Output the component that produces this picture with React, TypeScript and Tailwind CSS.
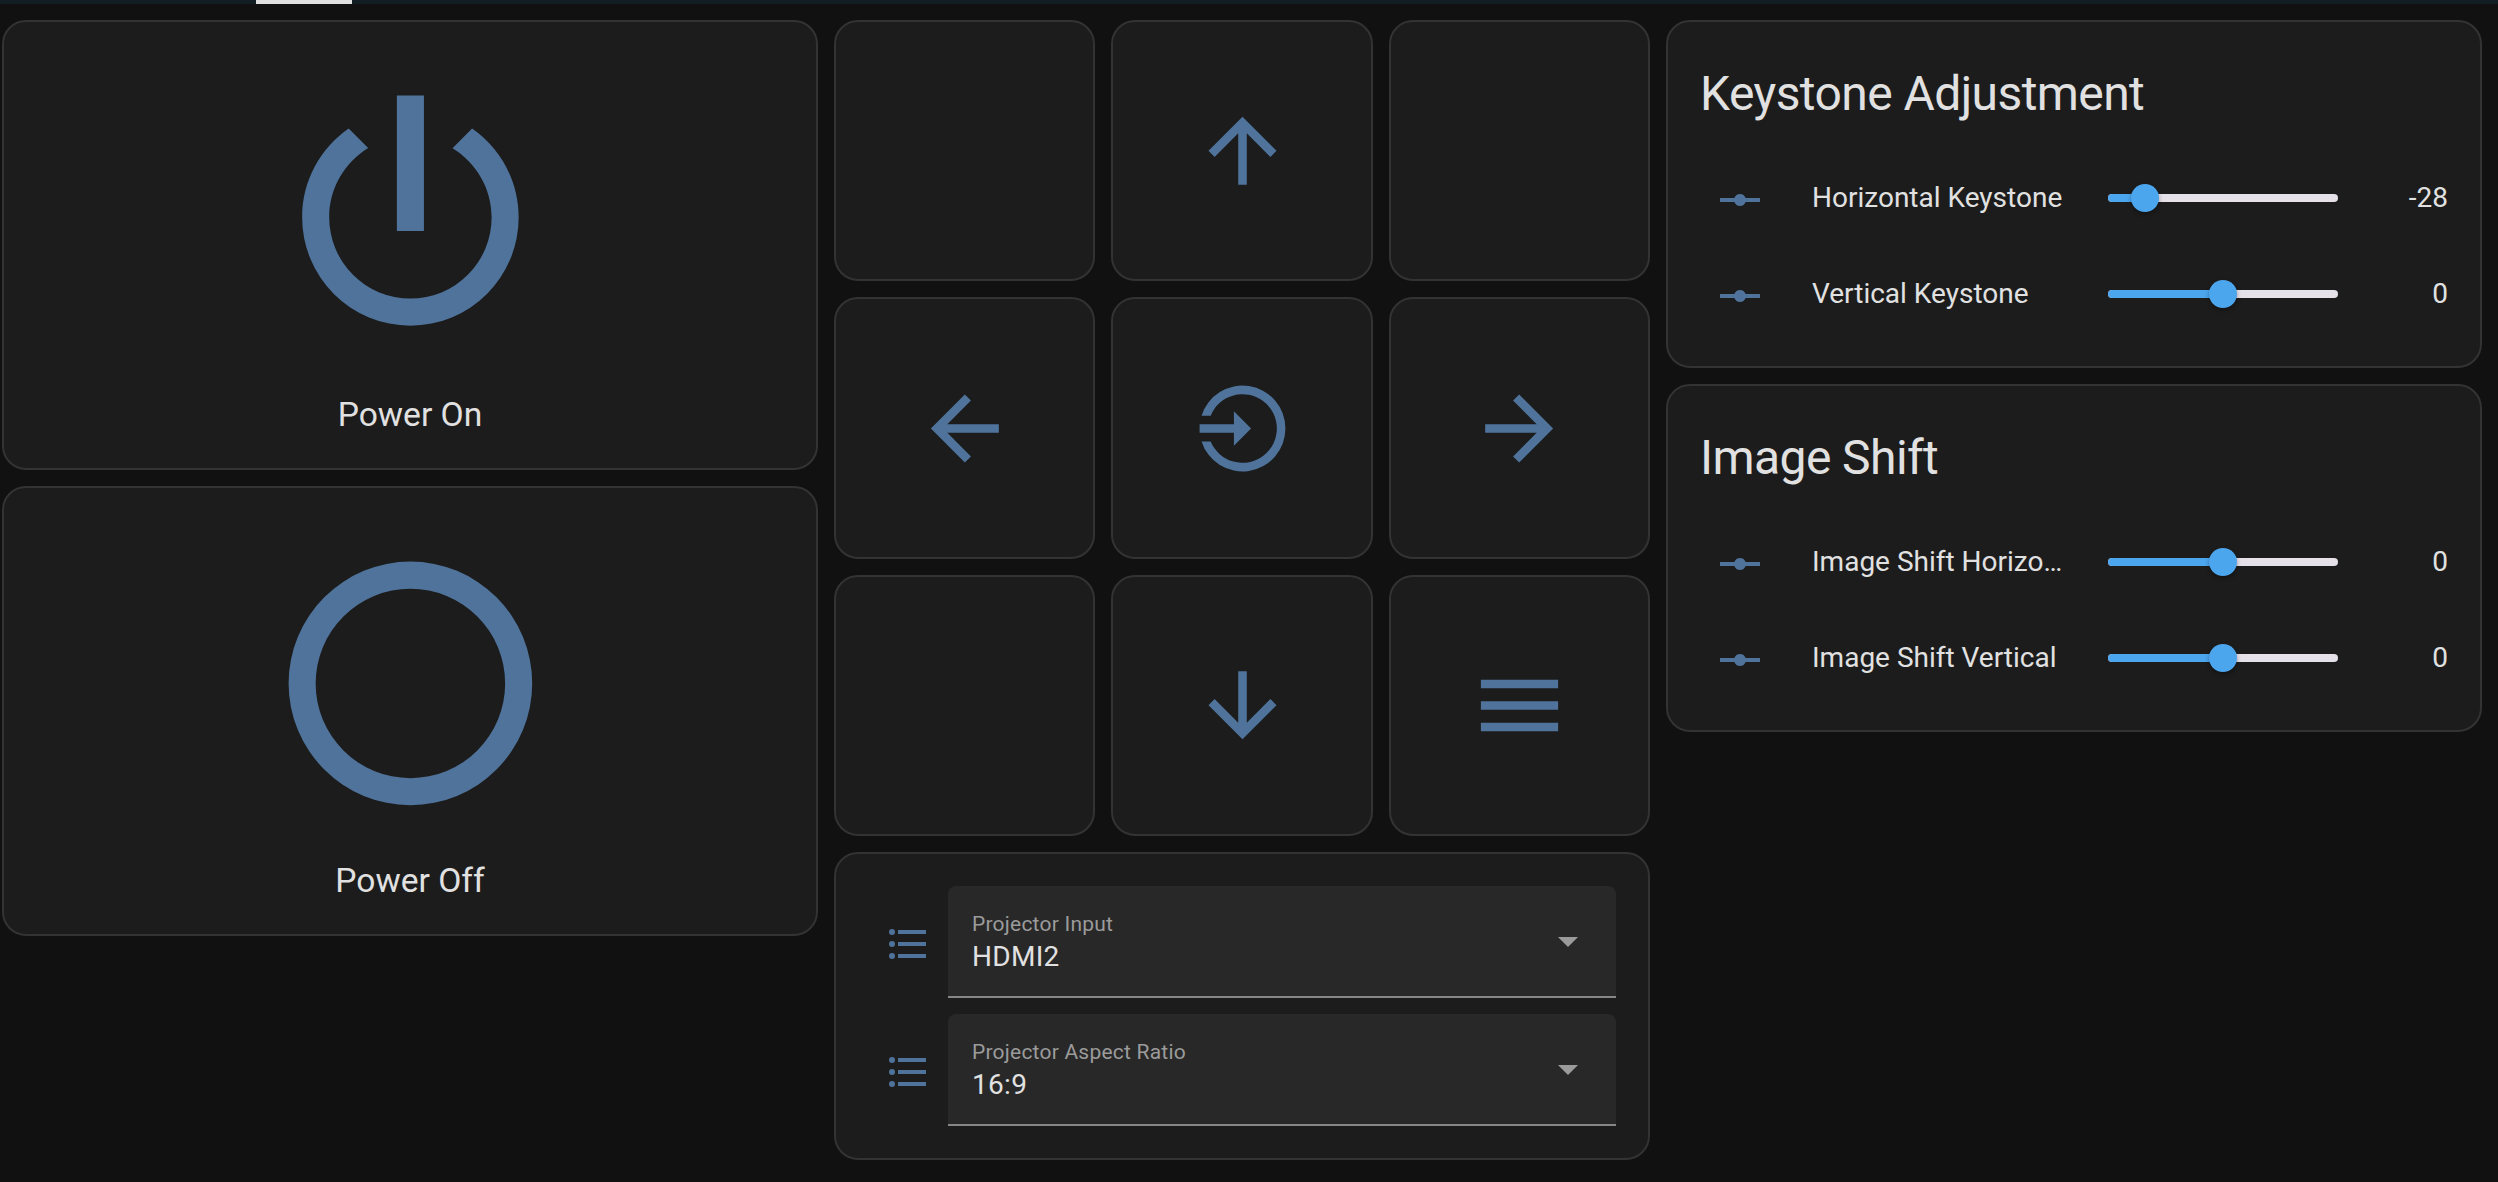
import type { ReactNode } from "react";

const ICONS = {
  power:
    "M16.56,5.44L15.11,6.89C16.84,7.94 18,9.83 18,12A6,6 0 0,1 12,18A6,6 0 0,1 6,12C6,9.83 7.16,7.94 8.88,6.88L7.44,5.44C5.36,6.88 4,9.28 4,12A8,8 0 0,0 12,20A8,8 0 0,0 20,12C20,9.28 18.64,6.88 16.56,5.44M13,3H11V13H13",
  powerOff:
    "M12,3A9,9 0 0,0 3,12A9,9 0 0,0 12,21A9,9 0 0,0 21,12A9,9 0 0,0 12,3M12,19A7,7 0 0,1 5,12A7,7 0 0,1 12,5A7,7 0 0,1 19,12A7,7 0 0,1 12,19Z",
  up: "M13,20H11V8L5.5,13.5L4.08,12.08L12,4.16L19.92,12.08L18.5,13.5L13,8V20Z",
  down: "M11,4H13V16L18.5,10.5L19.92,11.92L12,19.84L4.08,11.92L5.5,10.5L11,16V4Z",
  left: "M20,11V13H8L13.5,18.5L12.08,19.92L4.16,12L12.08,4.08L13.5,5.5L8,11H20Z",
  right: "M4,11V13H16L10.5,18.5L11.92,19.92L19.84,12L11.92,4.08L10.5,5.5L16,11H4Z",
  enter:
    "M14,12L10,8V11H2V13H10V16M22,12A10,10 0 0,1 2.46,15H4.59A8,8 0 1,0 4.59,9H2.46A10,10 0 0,1 22,12Z",
  menu: "M3,6H21V8H3V6M3,11H21V13H3V11M3,16H21V18H3V16Z",
  list: "M7,5H21V7H7V5M7,13V11H21V13H7M4,4.5A1.5,1.5 0 0,1 5.5,6A1.5,1.5 0 0,1 4,7.5A1.5,1.5 0 0,1 2.5,6A1.5,1.5 0 0,1 4,4.5M4,10.5A1.5,1.5 0 0,1 5.5,12A1.5,1.5 0 0,1 4,13.5A1.5,1.5 0 0,1 2.5,12A1.5,1.5 0 0,1 4,10.5M7,19V17H21V19H7M4,16.5A1.5,1.5 0 0,1 5.5,18A1.5,1.5 0 0,1 4,19.5A1.5,1.5 0 0,1 2.5,18A1.5,1.5 0 0,1 4,16.5Z",
  vertex:
    "M2,11H9.17C9.58,9.83 10.69,9 12,9C13.31,9 14.42,9.83 14.83,11H22V13H14.83C14.42,14.17 13.31,15 12,15C10.69,15 9.58,14.17 9.17,13H2V11Z",
  caret: "M7,10L12,15L17,10Z",
};

type IconName = keyof typeof ICONS;

function Icon({ name, className }: { name: IconName; className: string }) {
  return (
    <svg viewBox="0 0 24 24" fill="currentColor" className={`shrink-0 ${className}`}>
      <path d={ICONS[name]} />
    </svg>
  );
}

function Card({ className = "", children }: { className?: string; children?: ReactNode }) {
  return (
    <div className={`rounded-3xl border-2 border-[#333333] bg-[#1c1c1c] ${className}`}>{children}</div>
  );
}

function PowerButton({ icon, label }: { icon: IconName; label: string }) {
  return (
    <Card className="flex h-[450px] flex-col items-center pt-[32.8px]">
      <Icon name={icon} className="size-[324.8px] text-[#4f739b]" />
      <span className="mt-[14.4px] text-[33.6px] leading-[41px]">{label}</span>
    </Card>
  );
}

const PAD: (IconName | null)[] = [null, "up", null, "left", "enter", "right", null, "down", "menu"];

function RemotePad() {
  return (
    <div className="grid grid-cols-3 gap-4">
      {PAD.map((name, i) => (
        <Card
          key={i}
          className={`flex aspect-square items-center justify-center ${i % 3 === 1 ? "pl-px" : ""}`}
        >
          {name && <Icon name={name} className="size-[103px] text-[#4f739b]" />}
        </Card>
      ))}
    </div>
  );
}

function SelectRow({ label, value }: { label: string; value: string }) {
  return (
    <div className="flex items-center gap-4">
      <Icon name="list" className="mt-1 size-12 text-[#4f739b]" />
      <div className="flex h-28 grow items-center justify-between rounded-t-lg border-b-2 border-[#868686] bg-[#282828] px-6">
        <div className="flex flex-col pt-0.5">
          <span className="text-[21px] leading-7 tracking-[0.22px] text-[#9b9b9b]">{label}</span>
          <span className="mt-px text-[28px] leading-9 tracking-[0.3px]">{value}</span>
        </div>
        <Icon name="caret" className="size-12 text-[#9b9b9b]" />
      </div>
    </div>
  );
}

function SliderRow({ label, value, offset }: { label: string; value: number; offset: number }) {
  return (
    <div className="flex h-20 items-center">
      <Icon name="vertex" className="mt-1 ml-4 size-12 text-[#4f739b]" />
      <span className="ml-12 w-[252px] truncate text-[28px] leading-10">{label}</span>
      <div className="relative ml-11 h-2 w-[230px] rounded bg-[#e6e0e9]">
        <div className="h-2 rounded-l bg-[#4ca6ee]" style={{ width: offset }} />
        <div
          className="absolute -top-2.5 size-7 -translate-x-1/2 rounded-full bg-[#4ca6ee] shadow-[0_2px_4px_rgba(0,0,0,0.35)]"
          style={{ left: offset }}
        />
      </div>
      <span className="grow text-right text-[28px] leading-10">{value}</span>
    </div>
  );
}

type Slider = { label: string; value: number; offset: number };

function SliderCard({ title, rows }: { title: string; rows: Slider[] }) {
  return (
    <Card className="px-8 pt-6 pb-8">
      <h2 className="pb-4 text-5xl leading-[96px] tracking-[-0.012em]">{title}</h2>
      <div className="flex flex-col gap-4">
        {rows.map((row) => (
          <SliderRow key={row.label} {...row} />
        ))}
      </div>
    </Card>
  );
}

export default function App() {
  return (
    <div className="h-[1182px] w-[2498px] overflow-hidden bg-[#111111] font-['Roboto',sans-serif] text-[#e1e1e1]">
      <div className="h-1 bg-[#121e24] pl-64">
        <div className="h-1 w-24 bg-[#e1e1e1]" />
      </div>
      <div className="grid grid-cols-3 items-start gap-4 pt-4 pr-4 pl-0.5">
        <div className="flex flex-col gap-4">
          <PowerButton icon="power" label="Power On" />
          <PowerButton icon="powerOff" label="Power Off" />
        </div>
        <div className="flex flex-col gap-4">
          <RemotePad />
          <Card className="flex flex-col gap-4 p-8 pl-12">
            <SelectRow label="Projector Input" value="HDMI2" />
            <SelectRow label="Projector Aspect Ratio" value="16:9" />
          </Card>
        </div>
        <div className="flex flex-col gap-4">
          <SliderCard
            title="Keystone Adjustment"
            rows={[
              { label: "Horizontal Keystone", value: -28, offset: 37 },
              { label: "Vertical Keystone", value: 0, offset: 115 },
            ]}
          />
          <SliderCard
            title="Image Shift"
            rows={[
              { label: "Image Shift Horizontal", value: 0, offset: 115 },
              { label: "Image Shift Vertical", value: 0, offset: 115 },
            ]}
          />
        </div>
      </div>
    </div>
  );
}
